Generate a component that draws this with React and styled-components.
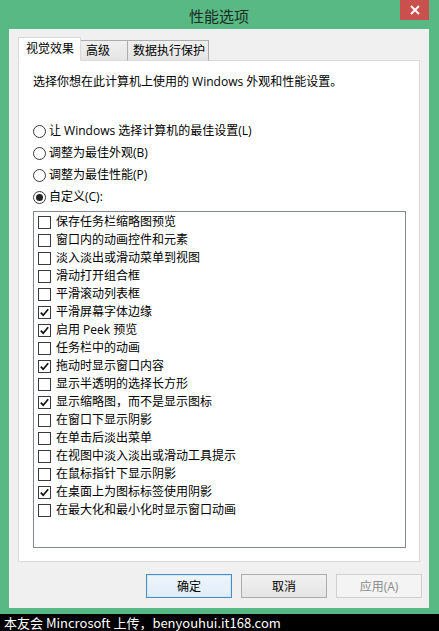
import React from "react";
import styled, { createGlobalStyle } from "styled-components";

const GlobalStyle = createGlobalStyle`
  html, body {
    margin: 0;
    padding: 0;
    background: #000;
  }
  body {
    font-family: "Open Sans", "Noto Sans CJK SC", sans-serif;
    font-size: 12px;
    color: #000;
  }
`;

const Page = styled.div`
  width: 439px;
  height: 631px;
  display: flex;
  flex-direction: column;
  overflow: hidden;
`;

const Frame = styled.div`
  height: 614px;
  background: #58b985;
  display: flex;
  flex-direction: column;
  padding: 0 10px 6px 9px;
  box-sizing: border-box;
`;

const TitleBar = styled.div`
  height: 29px;
  display: grid;
  grid-template-columns: 1fr auto 1fr;
  align-items: start;
`;

const Title = styled.div`
  font-family: "Noto Sans CJK SC", sans-serif;
  font-size: 15px;
  line-height: 20px;
  color: #1c2a22;
  padding-top: 6px;
`;

const CloseButton = styled.div`
  justify-self: end;
  width: 29px;
  height: 20px;
  background: #c9504c;
  display: flex;
  align-items: center;
  justify-content: center;
`;

const Client = styled.div`
  flex: 1;
  background: #f0f0f0;
  display: flex;
  flex-direction: column;
  padding: 9px 9px 9px 9px;
  box-sizing: border-box;
`;

const TabRow = styled.div`
  display: flex;
  align-items: flex-end;
  height: 23px;
  position: relative;
  z-index: 1;
  margin-bottom: -1px;
`;

const Tab = styled.div`
  box-sizing: border-box;
  width: ${({ w }) => w}px;
  height: ${({ active }) => (active ? "24px" : "21px")};
  padding-left: ${({ active }) => (active ? "7px" : "5px")};
  margin-left: ${({ first }) => (first ? "0" : "-1px")};
  border: 1px solid ${({ active }) => (active ? "#d9d9d9" : "#acacac")};
  border-bottom: ${({ active }) => (active ? "1px solid #fff" : "1px solid #d9d9d9")};
  background: ${({ active }) => (active ? "#fff" : "linear-gradient(#f0f0f0, #e5e5e5)")};
  line-height: ${({ active }) => (active ? "22px" : "19px")};
  font-size: 12px;
  white-space: nowrap;
  color: #000;
  ${({ active }) => active && "z-index: 2;"}
`;

const Panel = styled.div`
  height: 502px;
  box-sizing: border-box;
  border: 1px solid #d9d9d9;
  background: #fff;
  padding: 12px 13px 0 14px;
  display: flex;
  flex-direction: column;
`;

const Description = styled.div`
  line-height: 18px;
  height: 18px;
  white-space: nowrap;
`;

const RadioGroup = styled.div`
  margin-top: 29px;
  display: flex;
  flex-direction: column;
`;

const RadioRow = styled.div`
  display: flex;
  align-items: center;
  height: 22px;
  gap: 3px;
  line-height: 22px;
`;

const RadioCircle = styled.span`
  width: 13px;
  height: 13px;
  box-sizing: border-box;
  border: 1px solid #3a3a3a;
  border-radius: 50%;
  background: #fff;
  display: flex;
  align-items: center;
  justify-content: center;
  &::after {
    content: "";
    width: 7px;
    height: 7px;
    border-radius: 50%;
    background: ${({ checked }) => (checked ? "#222" : "transparent")};
  }
`;

const ListBox = styled.div`
  margin-top: 3px;
  height: 337px;
  width: 373px;
  box-sizing: border-box;
  border: 1px solid #828790;
  background: #fff;
  padding: 1px 0 0 4px;
  display: flex;
  flex-direction: column;
`;

const CheckRow = styled.div`
  display: flex;
  align-items: center;
  gap: 5px;
  height: 18px;
  line-height: 18px;
  white-space: nowrap;
`;

const CheckBox = styled.span`
  width: 13px;
  height: 13px;
  box-sizing: border-box;
  border: 1px solid #3a3a3a;
  background: #fff;
  display: flex;
  align-items: center;
  justify-content: center;
`;

const ButtonRow = styled.div`
  display: flex;
  justify-content: flex-end;
  gap: 9px;
  margin-top: 12px;
  margin-right: -2px;
`;

const Button = styled.div`
  width: ${({ w }) => w}px;
  height: 24px;
  box-sizing: border-box;
  display: flex;
  align-items: center;
  justify-content: center;
  font-size: 12px;
  border: 1px solid ${({ kind }) =>
    kind === "default" ? "#4a8dc4" : kind === "disabled" ? "#d0d0d0" : "#acacac"};
  background: ${({ kind }) =>
    kind === "default"
      ? "linear-gradient(#eef5fc, #e0edf9)"
      : kind === "disabled"
      ? "#f4f4f4"
      : "linear-gradient(#f0f0f0, #e5e5e5)"};
  color: ${({ kind }) => (kind === "disabled" ? "#8a8a8a" : "#000")};
  ${({ kind }) => kind === "default" && "box-shadow: inset 0 0 0 1px #d4e8fb;"}
`;

const Footer = styled.div`
  height: 17px;
  background: #000;
  color: #fff;
  font-family: "Noto Sans CJK SC", sans-serif;
  font-size: 13px;
  line-height: 17px;
  padding-left: 4px;
  white-space: nowrap;
`;

const radios = [
  { label: "让 Windows 选择计算机的最佳设置(L)" },
  { label: "调整为最佳外观(B)" },
  { label: "调整为最佳性能(P)" },
  { label: "自定义(C):", checked: true },
];

const options = [
  ["保存任务栏缩略图预览", false],
  ["窗口内的动画控件和元素", false],
  ["淡入淡出或滑动菜单到视图", false],
  ["滑动打开组合框", false],
  ["平滑滚动列表框", false],
  ["平滑屏幕字体边缘", true],
  ["启用 Peek 预览", true],
  ["任务栏中的动画", false],
  ["拖动时显示窗口内容", true],
  ["显示半透明的选择长方形", false],
  ["显示缩略图，而不是显示图标", true],
  ["在窗口下显示阴影", false],
  ["在单击后淡出菜单", false],
  ["在视图中淡入淡出或滑动工具提示", false],
  ["在鼠标指针下显示阴影", false],
  ["在桌面上为图标标签使用阴影", true],
  ["在最大化和最小化时显示窗口动画", false],
];

const tabs = [
  { label: "视觉效果", w: 63, active: true },
  { label: "高级", w: 48 },
  { label: "数据执行保护", w: 82 },
];

function CheckMark() {
  return (
    <svg width="11" height="11" viewBox="0 0 11 11">
      <path d="M1.8 5.6 L4.2 8.2 L9.2 2.2" fill="none" stroke="#111" strokeWidth="1.7" />
    </svg>
  );
}

function App() {
  return (
    <Page>
      <GlobalStyle />
      <Frame>
        <TitleBar>
          <div />
          <Title>性能选项</Title>
          <CloseButton>
            <svg width="10" height="10" viewBox="0 0 10 10">
              <path d="M1 1 L9 9 M9 1 L1 9" stroke="#fff" strokeWidth="1.8" />
            </svg>
          </CloseButton>
        </TitleBar>
        <Client>
          <TabRow>
            {tabs.map((t, i) => (
              <Tab key={t.label} active={t.active} first={i === 0} w={t.w}>
                {t.label}
              </Tab>
            ))}
          </TabRow>
          <Panel>
            <Description>选择你想在此计算机上使用的 Windows 外观和性能设置。</Description>
            <RadioGroup>
              {radios.map((r) => (
                <RadioRow key={r.label}>
                  <RadioCircle checked={r.checked} />
                  <span>{r.label}</span>
                </RadioRow>
              ))}
            </RadioGroup>
            <ListBox>
              {options.map(([label, checked]) => (
                <CheckRow key={label}>
                  <CheckBox>{checked && <CheckMark />}</CheckBox>
                  <span>{label}</span>
                </CheckRow>
              ))}
            </ListBox>
          </Panel>
          <ButtonRow>
            <Button kind="default" w={86}>确定</Button>
            <Button w={86}>取消</Button>
            <Button kind="disabled" w={86}>应用(A)</Button>
          </ButtonRow>
        </Client>
      </Frame>
      <Footer>本友会 Mincrosoft 上传，benyouhui.it168.com</Footer>
    </Page>
  );
}

export default App;
